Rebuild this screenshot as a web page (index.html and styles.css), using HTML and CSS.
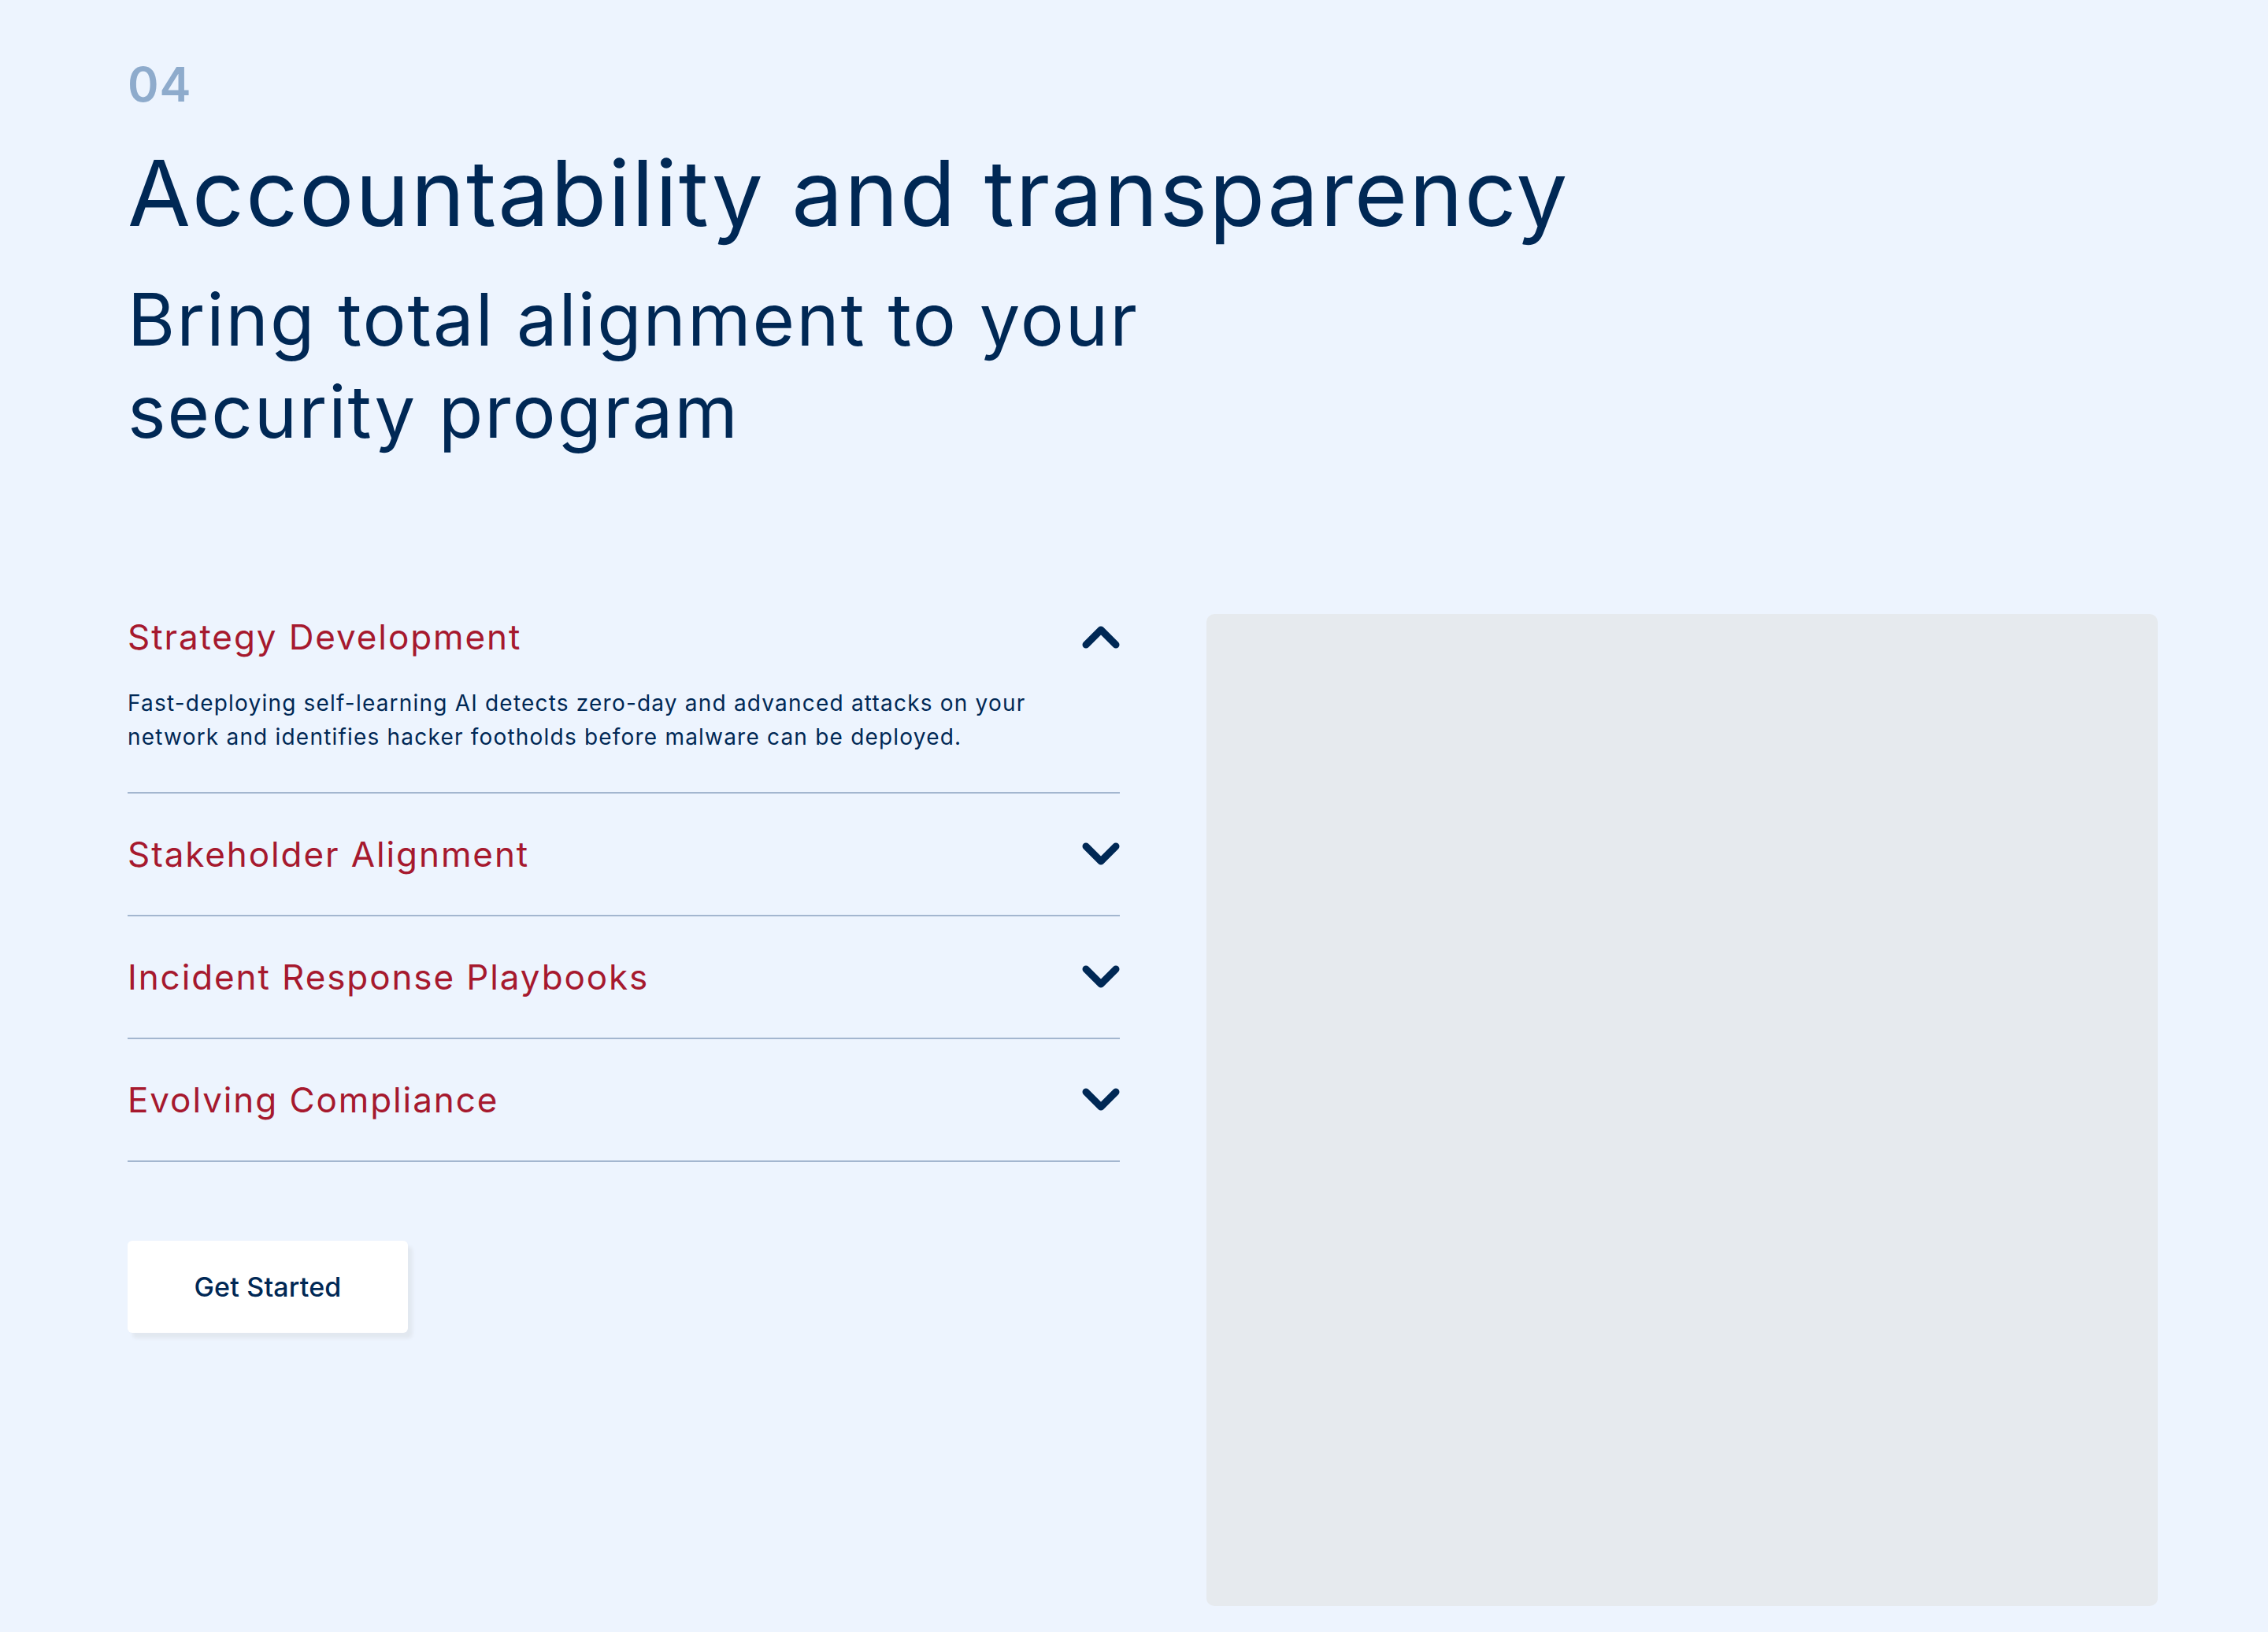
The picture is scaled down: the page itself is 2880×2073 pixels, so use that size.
FILE: index.html
```html
<!DOCTYPE html>
<html lang="en">
<head>
<meta charset="utf-8">
<title>Accountability and transparency</title>
<link rel="stylesheet" href="styles.css">
</head>
<body>
<section class="section">
  <header class="intro">
    <div class="num">04</div>
    <h1 class="title">Accountability and transparency</h1>
    <h2 class="subtitle">Bring total alignment to your<br>security program</h2>
  </header>
  <div class="grid">
    <div class="left">
      <div class="accordion">
        <div class="item open">
          <div class="item-head">
            <span class="item-title">Strategy Development</span>
            <svg class="chev" viewBox="0 0 48 30" width="48" height="30"><path d="M5 25 L24 6 L43 25"/></svg>
          </div>
          <p class="item-body">Fast-deploying self-learning AI detects zero-day and advanced attacks on your network and identifies hacker footholds before malware can be deployed.</p>
        </div>
        <div class="item">
          <div class="item-head">
            <span class="item-title">Stakeholder Alignment</span>
            <svg class="chev" viewBox="0 0 48 30" width="48" height="30"><path d="M5 5 L24 24 L43 5"/></svg>
          </div>
        </div>
        <div class="item">
          <div class="item-head">
            <span class="item-title">Incident Response Playbooks</span>
            <svg class="chev" viewBox="0 0 48 30" width="48" height="30"><path d="M5 5 L24 24 L43 5"/></svg>
          </div>
        </div>
        <div class="item">
          <div class="item-head">
            <span class="item-title">Evolving Compliance</span>
            <svg class="chev" viewBox="0 0 48 30" width="48" height="30"><path d="M5 5 L24 24 L43 5"/></svg>
          </div>
        </div>
      </div>
      <button class="btn">Get Started</button>
    </div>
    <div class="panel"></div>
  </div>
</section>
</body>
</html>
```

FILE: styles.css
```css
* { box-sizing: border-box; }
html, body { margin: 0; padding: 0; }
body {
  background: #edf4fe;
  font-family: Inter, "Noto Sans", sans-serif;
  color: #002855;
  width: 2880px;
  height: 2073px;
  overflow: hidden;
}
.section {
  padding: 71px 140px 0 162px;
}
.num {
  font-size: 60px;
  line-height: 72px;
  font-weight: 600;
  color: #8eabcc;
  letter-spacing: 1px;
}
.title {
  margin: 33px 0 0;
  font-size: 116px;
  line-height: 139px;
  font-weight: 400;
  letter-spacing: 1.8px;
  color: #002855;
}
.subtitle {
  margin: 32px 0 0;
  font-size: 92px;
  line-height: 117px;
  font-weight: 400;
  letter-spacing: 2px;
  color: #002855;
}
.grid {
  margin-top: 151px;
  display: grid;
  grid-template-columns: 1260px 1208px;
  column-gap: 110px;
  align-items: start;
}
.item {
  border-bottom: 2px solid #a3b6cf;
  padding: 48px 0;
}
.item-head {
  display: flex;
  align-items: center;
  justify-content: space-between;
}
.item-title {
  font-size: 44px;
  line-height: 58px;
  letter-spacing: 1.9px;
  color: #a6192e;
}
.chev {
  display: block;
  fill: none;
  stroke: #002855;
  stroke-width: 9;
  stroke-linecap: round;
  stroke-linejoin: round;
}
.item-body {
  margin: 34px 0 0;
  max-width: 1180px;
  font-size: 28px;
  line-height: 43px;
  letter-spacing: 1.2px;
  color: #002855;
}
.btn {
  margin-top: 100px;
  width: 356px;
  height: 117px;
  background: #fff;
  border: none;
  border-radius: 6px;
  box-shadow: 6px 7px 4px #e2e8f0;
  font-family: Inter, "Noto Sans", sans-serif;
  font-size: 34px;
  font-weight: 500;
  color: #002855;
  letter-spacing: 0.2px;
  display: block;
}
.panel {
  margin-top: 48px;
  height: 1260px;
  background: #e6eaee;
  border-radius: 10px;
}
```
